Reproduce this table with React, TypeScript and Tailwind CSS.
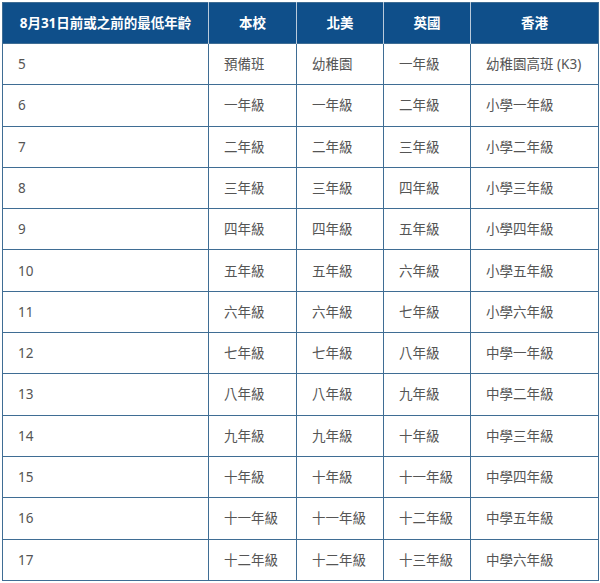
const HEADERS = ['8月31日前或之前的最低年齡', '本校', '北美', '英國', '香港']

const ROWS: string[][] = [
  ['5', '預備班', '幼稚園', '一年級', '幼稚園高班 (K3)'],
  ['6', '一年級', '一年級', '二年級', '小學一年級'],
  ['7', '二年級', '二年級', '三年級', '小學二年級'],
  ['8', '三年級', '三年級', '四年級', '小學三年級'],
  ['9', '四年級', '四年級', '五年級', '小學四年級'],
  ['10', '五年級', '五年級', '六年級', '小學五年級'],
  ['11', '六年級', '六年級', '七年級', '小學六年級'],
  ['12', '七年級', '七年級', '八年級', '中學一年級'],
  ['13', '八年級', '八年級', '九年級', '中學二年級'],
  ['14', '九年級', '九年級', '十年級', '中學三年級'],
  ['15', '十年級', '十年級', '十一年級', '中學四年級'],
  ['16', '十一年級', '十一年級', '十二年級', '中學五年級'],
  ['17', '十二年級', '十二年級', '十三年級', '中學六年級'],
]

const WIDTHS = ['w-[206px]', 'w-[88px]', 'w-[87px]', 'w-[87px]', 'w-[128px]']

export default function App() {
  return (
    <div className="min-h-[583px] w-[600px] bg-white pl-[2px] pt-[2px] font-['Noto_Sans','Noto_Sans_CJK_TC',sans-serif]">
      <table className="w-[596px] table-fixed border-collapse border border-[#3f6d94]">
        <thead>
          <tr className="h-[41px] bg-[#0f4f8a]">
            {HEADERS.map((h, i) => (
              <th
                key={h}
                className={`${WIDTHS[i]} border-x border-[#b9cadb] text-center text-[13.5px] font-bold text-white first:border-l-[#3f6d94] last:border-r-[#3f6d94]`}
              >
                {h}
              </th>
            ))}
          </tr>
        </thead>
        <tbody>
          {ROWS.map((row) => (
            <tr key={row[0]} className="h-[41.3px]">
              {row.map((cell, i) => (
                <td
                  key={i}
                  className="border border-[#3f6d94] pl-[15px] text-left text-[13.5px] text-[#555555]"
                >
                  {cell}
                </td>
              ))}
            </tr>
          ))}
        </tbody>
      </table>
    </div>
  )
}
